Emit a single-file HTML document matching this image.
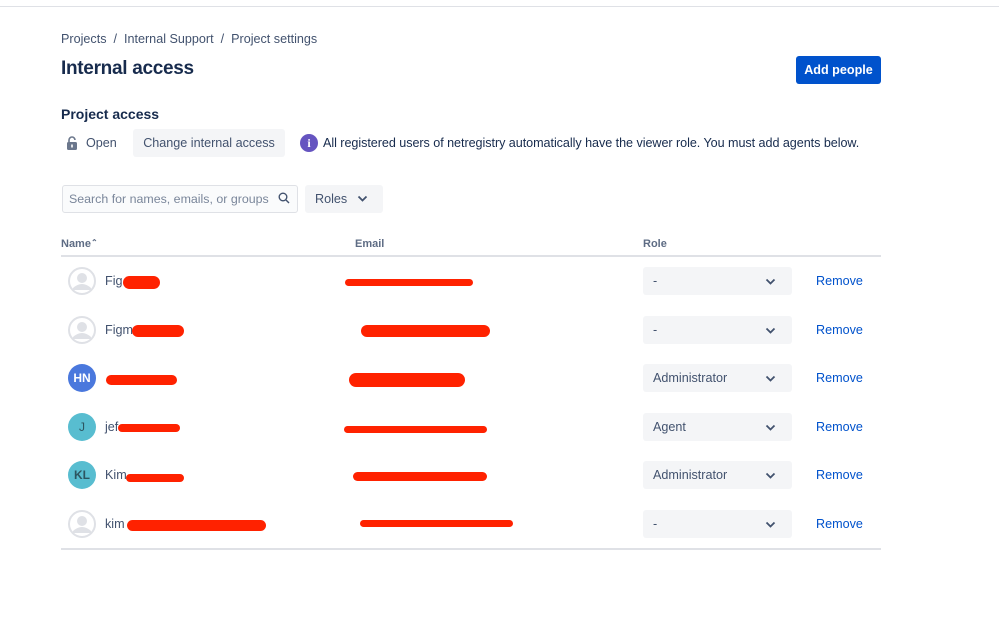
<!DOCTYPE html><html><head><style>
body{margin:0;width:999px;height:642px;background:#fff;font-family:"Liberation Sans",sans-serif;color:#172b4d;position:relative;overflow:hidden}
.a{position:absolute}
.top{left:0;top:6px;width:999px;height:1px;background:#dfe1e6}
.bc{left:61px;top:32px;font-size:12.6px;color:#42526e}
h1{position:absolute;left:61px;top:58px;margin:0;font-size:19px;font-weight:bold;color:#172b4d;letter-spacing:-0.3px}
.btn{left:796px;top:56px;width:85px;height:28px;background:#0052cc;color:#fff;font-size:12.6px;font-weight:bold;line-height:28px;text-align:center;border-radius:3px}
.t{font-size:12.6px}
.cia{left:133px;top:129px;width:152px;height:28px;background:#f4f5f7;border-radius:3px;line-height:28px;text-align:center;font-size:12.6px;color:#42526e}
.search{left:62px;top:185px;width:228px;height:26px;border:1px solid #dfe1e6;border-radius:3px;background:#fafbfc;font-size:12.4px;color:#7a869a;line-height:26px;padding-left:6px}
.roles{left:305px;top:185px;width:78px;height:28px;background:#f4f5f7;border-radius:3px;font-size:12.6px;line-height:28px;color:#42526e}
.th{font-size:11px;font-weight:bold;color:#5e6c84;top:238px}
.line{left:61px;width:820px;height:2px;background:#dfe1e6}
.av{left:68px;width:28px;height:28px;border-radius:50%;color:#fff;font-size:12px;font-weight:bold;text-align:center;line-height:28px}
.sel{left:643px;width:149px;height:28px;background:#f4f5f7;border-radius:3px;font-size:12.6px;line-height:28px;color:#42526e}
.sel span{position:absolute;left:10px}
.sel svg{position:absolute;left:122px;top:11px}
.rm{left:816px;font-size:12.6px;color:#0052cc}
.r{position:absolute;background:#ff2200;border-radius:7px}
.nm{left:105px;font-size:12.6px;color:#42526e}
</style></head><body>
<div class="a top"></div>
<div class="a bc">Projects &nbsp;/ &nbsp;Internal Support &nbsp;/ &nbsp;Project settings</div>
<h1>Internal access</h1>
<div class="a btn">Add people</div>
<div class="a t" style="left:61px;top:106px;font-size:14px;font-weight:bold;color:#172b4d">Project access</div>
<svg class="a" style="left:66px;top:136px" width="12" height="14" viewBox="0 0 12 14"><path d="M3 6V4a3 3 0 0 1 6 0" fill="none" stroke="#6b778c" stroke-width="1.6"/><rect x="1" y="6" width="10" height="8" rx="1.5" fill="#6b778c"/><rect x="5.2" y="8.5" width="1.6" height="3" fill="#fff"/></svg>
<div class="a t" style="left:86px;top:136px;color:#42526e">Open</div>
<div class="a cia">Change internal access</div>
<div class="a" style="left:300px;top:134px;width:18px;height:18px;border-radius:50%;background:#6554c0;color:#fff;font-size:12px;font-weight:bold;text-align:center;line-height:18px;font-family:'Liberation Serif',serif">i</div>
<div class="a t" style="left:323px;top:136px;color:#172b4d;letter-spacing:-0.05px">All registered users of netregistry automatically have the viewer role. You must add agents below.</div>
<div class="a search">Search for names, emails, or groups</div>
<svg class="a" style="left:278px;top:192px" width="12" height="12" viewBox="0 0 12 12"><circle cx="5" cy="5" r="3.8" fill="none" stroke="#42526e" stroke-width="1.4"/><path d="M8 8l3 3" stroke="#42526e" stroke-width="1.4"/></svg>
<div class="a roles"><span style="position:absolute;left:10px">Roles</span><svg style="position:absolute;left:52px;top:10px" width="11" height="8" viewBox="0 0 11 8"><path d="M1.5 1.5l4 4 4-4" fill="none" stroke="#42526e" stroke-width="1.8"/></svg></div>
<div class="a th" style="left:61px">Name<span style="font-size:8px;vertical-align:top">⌃</span></div>
<div class="a th" style="left:355px">Email</div>
<div class="a th" style="left:643px">Role</div>
<div class="a line" style="top:255px"></div>
<div class="a line" style="top:548px"></div>

<svg class="a" style="left:68px;top:267px" width="28" height="28" viewBox="0 0 28 28"><circle cx="14" cy="14" r="13" fill="#fff" stroke="#dfe1e6" stroke-width="2"/><circle cx="14" cy="11" r="5" fill="#dfe1e6"/><path d="M5 21q9-8 18 0v2H5z" fill="#dfe1e6"/></svg>
<svg class="a" style="left:68px;top:316px" width="28" height="28" viewBox="0 0 28 28"><circle cx="14" cy="14" r="13" fill="#fff" stroke="#dfe1e6" stroke-width="2"/><circle cx="14" cy="11" r="5" fill="#dfe1e6"/><path d="M5 21q9-8 18 0v2H5z" fill="#dfe1e6"/></svg>
<div class="a av" style="top:364px;background:#4a78dd">HN</div>
<div class="a av" style="top:413px;background:#58bdd0;color:#2c5560;font-weight:normal">J</div>
<div class="a av" style="top:461px;background:#58bdd0;color:#2c5560">KL</div>
<svg class="a" style="left:68px;top:510px" width="28" height="28" viewBox="0 0 28 28"><circle cx="14" cy="14" r="13" fill="#fff" stroke="#dfe1e6" stroke-width="2"/><circle cx="14" cy="11" r="5" fill="#dfe1e6"/><path d="M5 21q9-8 18 0v2H5z" fill="#dfe1e6"/></svg>

<div class="a nm" style="top:274px">Fig</div>
<div class="a nm" style="top:323px">Figm</div>
<div class="a nm" style="top:420px">jef</div>
<div class="a nm" style="top:468px">Kim</div>
<div class="a nm" style="top:517px">kim</div>

<div class="r" style="left:123px;top:276px;width:37px;height:13px"></div>
<div class="r" style="left:345px;top:279px;width:128px;height:7px"></div>
<div class="r" style="left:132px;top:325px;width:52px;height:12px"></div>
<div class="r" style="left:361px;top:325px;width:129px;height:12px"></div>
<div class="r" style="left:106px;top:375px;width:71px;height:10px"></div>
<div class="r" style="left:349px;top:373px;width:116px;height:14px"></div>
<div class="r" style="left:118px;top:424px;width:62px;height:8px"></div>
<div class="r" style="left:344px;top:426px;width:143px;height:7px"></div>
<div class="r" style="left:126px;top:474px;width:58px;height:8px"></div>
<div class="r" style="left:353px;top:472px;width:134px;height:9px"></div>
<div class="r" style="left:127px;top:520px;width:139px;height:11px"></div>
<div class="r" style="left:360px;top:520px;width:153px;height:7px"></div>

<div class="a sel" style="top:267px"><span>-</span><svg width="11" height="8" viewBox="0 0 11 8"><path d="M1.5 1.5l4 4 4-4" fill="none" stroke="#42526e" stroke-width="1.8"/></svg></div>
<div class="a sel" style="top:316px"><span>-</span><svg width="11" height="8" viewBox="0 0 11 8"><path d="M1.5 1.5l4 4 4-4" fill="none" stroke="#42526e" stroke-width="1.8"/></svg></div>
<div class="a sel" style="top:364px"><span>Administrator</span><svg width="11" height="8" viewBox="0 0 11 8"><path d="M1.5 1.5l4 4 4-4" fill="none" stroke="#42526e" stroke-width="1.8"/></svg></div>
<div class="a sel" style="top:413px"><span>Agent</span><svg width="11" height="8" viewBox="0 0 11 8"><path d="M1.5 1.5l4 4 4-4" fill="none" stroke="#42526e" stroke-width="1.8"/></svg></div>
<div class="a sel" style="top:461px"><span>Administrator</span><svg width="11" height="8" viewBox="0 0 11 8"><path d="M1.5 1.5l4 4 4-4" fill="none" stroke="#42526e" stroke-width="1.8"/></svg></div>
<div class="a sel" style="top:510px"><span>-</span><svg width="11" height="8" viewBox="0 0 11 8"><path d="M1.5 1.5l4 4 4-4" fill="none" stroke="#42526e" stroke-width="1.8"/></svg></div>

<div class="a rm" style="top:274px">Remove</div>
<div class="a rm" style="top:323px">Remove</div>
<div class="a rm" style="top:371px">Remove</div>
<div class="a rm" style="top:420px">Remove</div>
<div class="a rm" style="top:468px">Remove</div>
<div class="a rm" style="top:517px">Remove</div>
</body></html>
